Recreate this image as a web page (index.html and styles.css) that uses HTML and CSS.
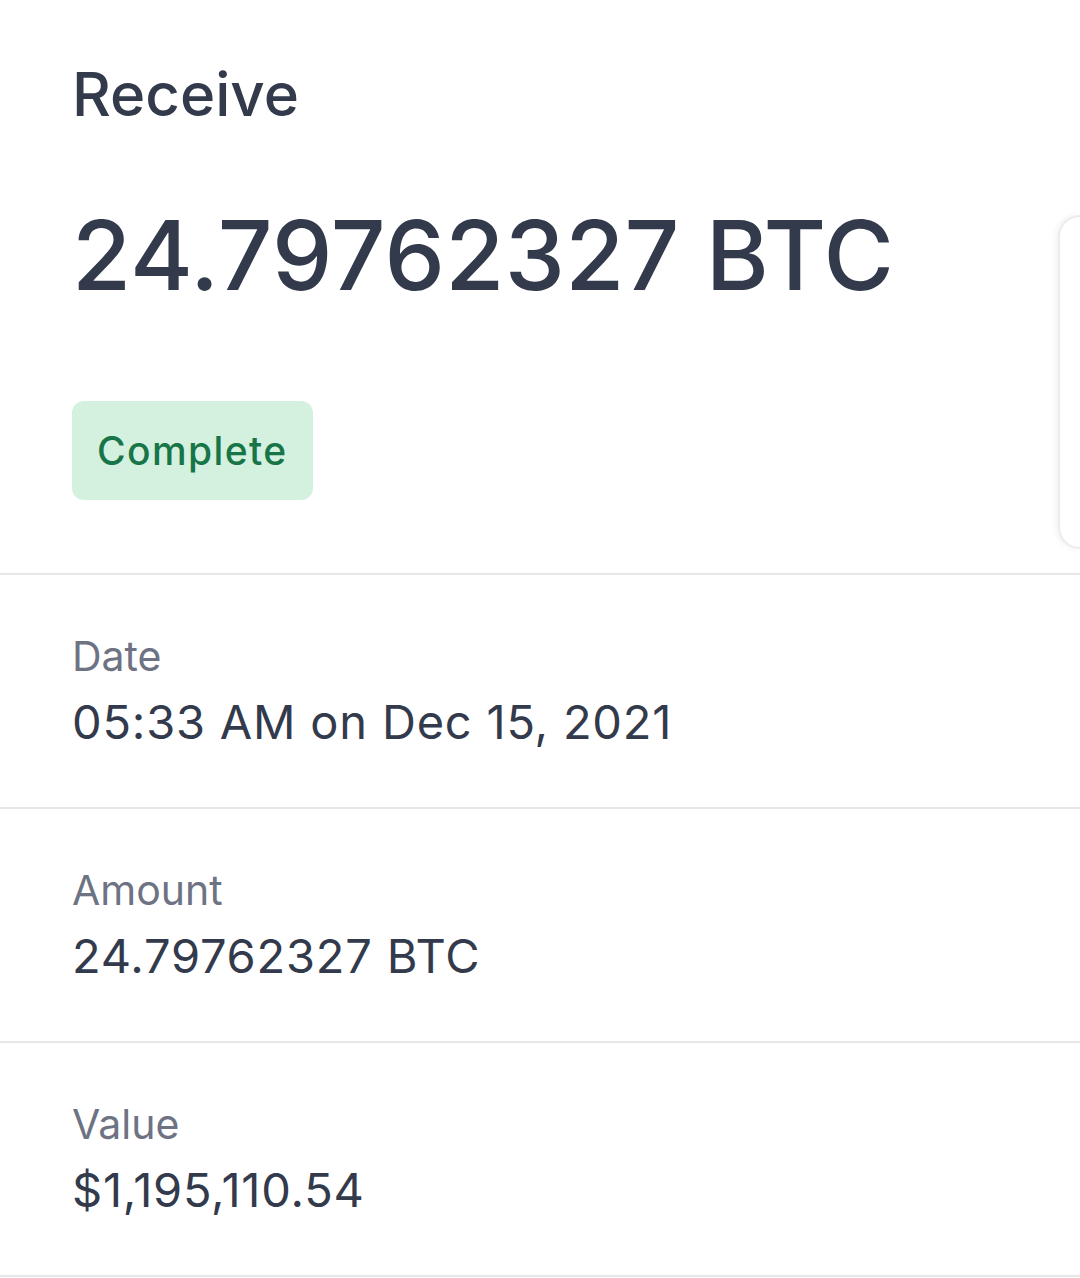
FILE: index.html
```html
<!DOCTYPE html>
<html lang="en">
<head>
    <meta charset="UTF-8">
    <meta name="viewport" content="width=device-width, initial-scale=1.0">
    <title>Receive</title>
    <link rel="stylesheet" href="styles.css">
</head>
<body>
    <div class="side-card"></div>

    <header class="summary">
        <h1 class="summary-title">Receive</h1>
        <div class="summary-amount">24.79762327 BTC</div>
        <span class="status">Complete</span>
    </header>

    <ul class="details">
        <li class="detail-row">
            <span class="detail-label">Date</span>
            <span class="detail-value">05:33 AM on Dec 15, 2021</span>
        </li>
        <li class="detail-row">
            <span class="detail-label">Amount</span>
            <span class="detail-value">24.79762327 BTC</span>
        </li>
        <li class="detail-row">
            <span class="detail-label">Value</span>
            <span class="detail-value">$1,195,110.54</span>
        </li>
    </ul>
</body>
</html>
```

FILE: styles.css
```css
html, body {
    margin: 0;
    height: 100%;
    overflow: hidden;
    background: #fff;
}

body {
    position: relative;
    font-family: Inter, "Noto Sans", sans-serif;
    color: #323a4c;
}

.summary {
    display: flex;
    flex-direction: column;
    align-items: flex-start;
    padding: 58px 72px 73px;
    border-bottom: 2px solid #e7e7e9;
}

.summary-title {
    margin: 0;
    font-size: 60px;
    line-height: 72px;
    font-weight: 500;
}

.summary-amount {
    margin-top: 67px;
    font-size: 96px;
    line-height: 116px;
    font-weight: 500;
    letter-spacing: 0.3px;
}

.status {
    margin-top: 88px;
    display: flex;
    align-items: center;
    height: 99px;
    padding: 0 25px;
    box-sizing: border-box;
    border-radius: 12px;
    background-color: #d4f0df;
    color: #177548;
    font-size: 39px;
    font-weight: 500;
    letter-spacing: 1.4px;
}

.details {
    list-style: none;
    margin: 0;
    padding: 0;
}

.detail-row {
    display: flex;
    flex-direction: column;
    gap: 14px;
    padding: 57px 72px;
    border-bottom: 2px solid #e7e7e9;
}

.detail-label {
    font-size: 41px;
    line-height: 48px;
    color: #6d7383;
}

.detail-value {
    font-size: 47px;
    line-height: 56px;
    letter-spacing: 0.8px;
}

/* edge of the next panel peeking in from the right */
.side-card {
    position: absolute;
    top: 215px;
    right: 0;
    width: 20px;
    height: 330px;
    border: 2px solid #ececec;
    border-right: none;
    border-radius: 30px 0 0 30px;
    box-shadow: -2px 0 6px rgba(0, 0, 0, 0.06);
    background: #fff;
}
```
